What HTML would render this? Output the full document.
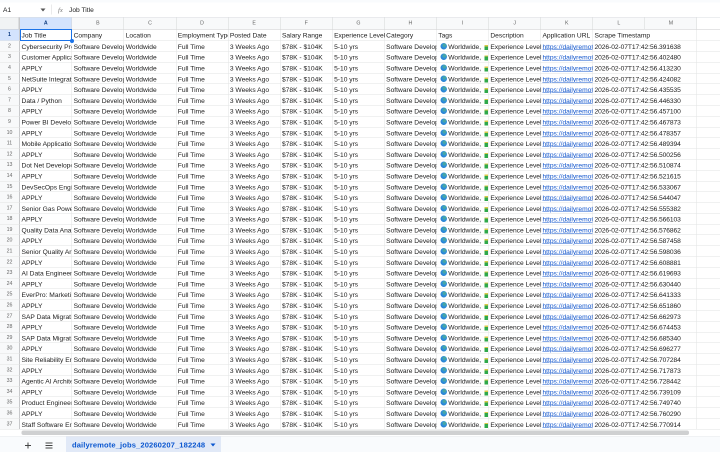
<!DOCTYPE html>
<html><head><meta charset="utf-8"><title>Sheet</title>
<style>
html,body{margin:0;padding:0;width:720px;height:452px;overflow:hidden;background:#fff}
#p{position:absolute;left:0;top:0;width:1440px;height:904px;overflow:hidden;transform:scale(.5);transform-origin:0 0;font-family:"Liberation Sans",Arial,sans-serif;color:#222;filter:blur(.5px)}
#top{position:absolute;left:0;top:0;width:1440px;height:35px;background:#fff;border-bottom:1px solid #dadce0;box-sizing:border-box}
#top:before{content:"";position:absolute;left:0;top:0;width:1440px;height:5px;background:#f9fbfd}
#top b{position:absolute;font-weight:400;font-size:13.33px;line-height:20px;top:10px;color:#222}
#grid{position:absolute;left:0;top:35px;width:1440px}
.h,.r{display:flex;box-sizing:border-box;border-bottom:1px solid #e2e3e3;width:1440px}
.h{height:24px;border-bottom-color:#c8c9cb}
.h u{background:#f8f9fa;color:#666;font-size:10.5px;line-height:23px;text-align:center;text-decoration:none;width:104.2px;flex:none;box-sizing:border-box;border-right:1px solid #d5d6d7}
.h u.c{width:40px;background:#f1f3f4;border-right:3px solid #c8c9cb}
.h u.s{background:#d3e3fd;font-weight:700;color:#0b3a80}
.r{height:21.6px}
.r:nth-child(2){height:22.8px}
.r u{width:40px;flex:none;box-sizing:border-box;background:#f8f9fa;color:#666;font-size:10.5px;line-height:21.6px;text-align:center;text-decoration:none;border-right:2px solid #c8c9cb}
.r:nth-child(2) u{background:#d3e3fd;font-weight:700;color:#0b3a80;line-height:21.8px}
.r i{font-style:normal;width:104.2px;flex:none;box-sizing:border-box;border-right:1px solid #e2e3e3;padding-left:3px;font-size:13.33px;line-height:24.6px;white-space:nowrap;overflow:hidden;color:#222}
.r:nth-child(2) i{line-height:24.8px}
.r i:nth-child(11),.r i:nth-child(8){overflow:visible}
.r i.k{color:#1155cc;text-decoration:underline}
.r i.l{overflow:visible;border-right:0;letter-spacing:-.15px}
.r:nth-child(2) i.l{letter-spacing:0}
.r i.t{position:relative}
.r i.t s{position:absolute;left:7px;top:4px;width:13px;height:13px;border-radius:50%;background:radial-gradient(circle at 60% 35%,#48a8a0 0 18%,#2f8fdc 42%,#1a6fc4 100%)}
.r i.t em{position:absolute;left:95px;top:8px;width:7.4px;height:10px;background:linear-gradient(#d9c84a 0 25%,#2fa84a 25%)}
.r i.t span{position:absolute;left:23px;top:0}
#sel{position:absolute;left:40px;top:58.4px;width:104.4px;height:23.4px;border:2.4px solid #1a73e8;box-sizing:border-box}
#hd{position:absolute;left:140px;top:77.6px;width:8px;height:8px;border-radius:50%;background:#1a73e8}
#sb{position:absolute;left:0;top:859.4px;width:1440px;height:13px;background:#fff}
#th{position:absolute;left:43px;top:861.4px;width:1335px;height:8.4px;border-radius:4px;background:#cfd0d1}
#bot{position:absolute;left:0;top:872px;width:1440px;height:32px;background:#f9fbfd;border-top:1px solid #e6e8ea;box-sizing:border-box}
#tab{position:absolute;left:132px;top:0;width:310px;height:32px;background:#e1e9f7;color:#0b57d0;font-size:15.2px;font-weight:700;line-height:35px;padding-left:12px;box-sizing:border-box;letter-spacing:.2px}
</style></head><body>
<div id="p">
<div id="top">
<b style="left:6px">A1</b>
<svg style="position:absolute;left:81px;top:17px" width="10" height="6"><path d="M0 0H10L5 6Z" fill="#555"/></svg>
<div style="position:absolute;left:102px;top:9px;width:1.4px;height:20px;background:#d5d6d7"></div>
<b style="left:116px;font-family:'Liberation Serif',serif;font-style:italic;color:#777">fx</b>
<b style="left:138px">Job Title</b>
</div>
<div id="grid">
<div class="h"><u class="c"></u><u class="s">A</u><u>B</u><u>C</u><u>D</u><u>E</u><u>F</u><u>G</u><u>H</u><u>I</u><u>J</u><u>K</u><u>L</u><u>M</u></div>
<div class="r"><u>1</u><i>Job Title</i><i>Company</i><i>Location</i><i>Employment Type</i><i>Posted Date</i><i>Salary Range</i><i>Experience Level</i><i>Category</i><i>Tags</i><i>Description</i><i>Application URL</i><i class="l">Scrape Timestamp</i><i></i></div>
<div class="r"><u>2</u><i>Cybersecurity Professional</i><i>Software Developer</i><i>Worldwide</i><i>Full Time</i><i>3 Weeks Ago</i><i>$78K - $104K</i><i>5-10 yrs</i><i>Software Development</i><i class="t"><s></s><span>Worldwide,</span><em></em></i><i>Experience Level</i><i class="k">https://dailyremote.com</i><i class="l">2026-02-07T17:42:56.391638</i><i></i></div>
<div class="r"><u>3</u><i>Customer Application</i><i>Software Developer</i><i>Worldwide</i><i>Full Time</i><i>3 Weeks Ago</i><i>$78K - $104K</i><i>5-10 yrs</i><i>Software Development</i><i class="t"><s></s><span>Worldwide,</span><em></em></i><i>Experience Level</i><i class="k">https://dailyremote.com</i><i class="l">2026-02-07T17:42:56.402480</i><i></i></div>
<div class="r"><u>4</u><i>APPLY</i><i>Software Developer</i><i>Worldwide</i><i>Full Time</i><i>3 Weeks Ago</i><i>$78K - $104K</i><i>5-10 yrs</i><i>Software Development</i><i class="t"><s></s><span>Worldwide,</span><em></em></i><i>Experience Level</i><i class="k">https://dailyremote.com</i><i class="l">2026-02-07T17:42:56.413230</i><i></i></div>
<div class="r"><u>5</u><i>NetSuite Integration</i><i>Software Developer</i><i>Worldwide</i><i>Full Time</i><i>3 Weeks Ago</i><i>$78K - $104K</i><i>5-10 yrs</i><i>Software Development</i><i class="t"><s></s><span>Worldwide,</span><em></em></i><i>Experience Level</i><i class="k">https://dailyremote.com</i><i class="l">2026-02-07T17:42:56.424082</i><i></i></div>
<div class="r"><u>6</u><i>APPLY</i><i>Software Developer</i><i>Worldwide</i><i>Full Time</i><i>3 Weeks Ago</i><i>$78K - $104K</i><i>5-10 yrs</i><i>Software Development</i><i class="t"><s></s><span>Worldwide,</span><em></em></i><i>Experience Level</i><i class="k">https://dailyremote.com</i><i class="l">2026-02-07T17:42:56.435535</i><i></i></div>
<div class="r"><u>7</u><i>Data / Python</i><i>Software Developer</i><i>Worldwide</i><i>Full Time</i><i>3 Weeks Ago</i><i>$78K - $104K</i><i>5-10 yrs</i><i>Software Development</i><i class="t"><s></s><span>Worldwide,</span><em></em></i><i>Experience Level</i><i class="k">https://dailyremote.com</i><i class="l">2026-02-07T17:42:56.446330</i><i></i></div>
<div class="r"><u>8</u><i>APPLY</i><i>Software Developer</i><i>Worldwide</i><i>Full Time</i><i>3 Weeks Ago</i><i>$78K - $104K</i><i>5-10 yrs</i><i>Software Development</i><i class="t"><s></s><span>Worldwide,</span><em></em></i><i>Experience Level</i><i class="k">https://dailyremote.com</i><i class="l">2026-02-07T17:42:56.457100</i><i></i></div>
<div class="r"><u>9</u><i>Power BI Developer</i><i>Software Developer</i><i>Worldwide</i><i>Full Time</i><i>3 Weeks Ago</i><i>$78K - $104K</i><i>5-10 yrs</i><i>Software Development</i><i class="t"><s></s><span>Worldwide,</span><em></em></i><i>Experience Level</i><i class="k">https://dailyremote.com</i><i class="l">2026-02-07T17:42:56.467873</i><i></i></div>
<div class="r"><u>10</u><i>APPLY</i><i>Software Developer</i><i>Worldwide</i><i>Full Time</i><i>3 Weeks Ago</i><i>$78K - $104K</i><i>5-10 yrs</i><i>Software Development</i><i class="t"><s></s><span>Worldwide,</span><em></em></i><i>Experience Level</i><i class="k">https://dailyremote.com</i><i class="l">2026-02-07T17:42:56.478357</i><i></i></div>
<div class="r"><u>11</u><i>Mobile Application</i><i>Software Developer</i><i>Worldwide</i><i>Full Time</i><i>3 Weeks Ago</i><i>$78K - $104K</i><i>5-10 yrs</i><i>Software Development</i><i class="t"><s></s><span>Worldwide,</span><em></em></i><i>Experience Level</i><i class="k">https://dailyremote.com</i><i class="l">2026-02-07T17:42:56.489394</i><i></i></div>
<div class="r"><u>12</u><i>APPLY</i><i>Software Developer</i><i>Worldwide</i><i>Full Time</i><i>3 Weeks Ago</i><i>$78K - $104K</i><i>5-10 yrs</i><i>Software Development</i><i class="t"><s></s><span>Worldwide,</span><em></em></i><i>Experience Level</i><i class="k">https://dailyremote.com</i><i class="l">2026-02-07T17:42:56.500256</i><i></i></div>
<div class="r"><u>13</u><i>Dot Net Developer</i><i>Software Developer</i><i>Worldwide</i><i>Full Time</i><i>3 Weeks Ago</i><i>$78K - $104K</i><i>5-10 yrs</i><i>Software Development</i><i class="t"><s></s><span>Worldwide,</span><em></em></i><i>Experience Level</i><i class="k">https://dailyremote.com</i><i class="l">2026-02-07T17:42:56.510874</i><i></i></div>
<div class="r"><u>14</u><i>APPLY</i><i>Software Developer</i><i>Worldwide</i><i>Full Time</i><i>3 Weeks Ago</i><i>$78K - $104K</i><i>5-10 yrs</i><i>Software Development</i><i class="t"><s></s><span>Worldwide,</span><em></em></i><i>Experience Level</i><i class="k">https://dailyremote.com</i><i class="l">2026-02-07T17:42:56.521615</i><i></i></div>
<div class="r"><u>15</u><i>DevSecOps Engineer</i><i>Software Developer</i><i>Worldwide</i><i>Full Time</i><i>3 Weeks Ago</i><i>$78K - $104K</i><i>5-10 yrs</i><i>Software Development</i><i class="t"><s></s><span>Worldwide,</span><em></em></i><i>Experience Level</i><i class="k">https://dailyremote.com</i><i class="l">2026-02-07T17:42:56.533067</i><i></i></div>
<div class="r"><u>16</u><i>APPLY</i><i>Software Developer</i><i>Worldwide</i><i>Full Time</i><i>3 Weeks Ago</i><i>$78K - $104K</i><i>5-10 yrs</i><i>Software Development</i><i class="t"><s></s><span>Worldwide,</span><em></em></i><i>Experience Level</i><i class="k">https://dailyremote.com</i><i class="l">2026-02-07T17:42:56.544047</i><i></i></div>
<div class="r"><u>17</u><i>Senior Gas Power</i><i>Software Developer</i><i>Worldwide</i><i>Full Time</i><i>3 Weeks Ago</i><i>$78K - $104K</i><i>5-10 yrs</i><i>Software Development</i><i class="t"><s></s><span>Worldwide,</span><em></em></i><i>Experience Level</i><i class="k">https://dailyremote.com</i><i class="l">2026-02-07T17:42:56.555382</i><i></i></div>
<div class="r"><u>18</u><i>APPLY</i><i>Software Developer</i><i>Worldwide</i><i>Full Time</i><i>3 Weeks Ago</i><i>$78K - $104K</i><i>5-10 yrs</i><i>Software Development</i><i class="t"><s></s><span>Worldwide,</span><em></em></i><i>Experience Level</i><i class="k">https://dailyremote.com</i><i class="l">2026-02-07T17:42:56.566103</i><i></i></div>
<div class="r"><u>19</u><i>Quality Data Analyst</i><i>Software Developer</i><i>Worldwide</i><i>Full Time</i><i>3 Weeks Ago</i><i>$78K - $104K</i><i>5-10 yrs</i><i>Software Development</i><i class="t"><s></s><span>Worldwide,</span><em></em></i><i>Experience Level</i><i class="k">https://dailyremote.com</i><i class="l">2026-02-07T17:42:56.576862</i><i></i></div>
<div class="r"><u>20</u><i>APPLY</i><i>Software Developer</i><i>Worldwide</i><i>Full Time</i><i>3 Weeks Ago</i><i>$78K - $104K</i><i>5-10 yrs</i><i>Software Development</i><i class="t"><s></s><span>Worldwide,</span><em></em></i><i>Experience Level</i><i class="k">https://dailyremote.com</i><i class="l">2026-02-07T17:42:56.587458</i><i></i></div>
<div class="r"><u>21</u><i>Senior Quality Analyst</i><i>Software Developer</i><i>Worldwide</i><i>Full Time</i><i>3 Weeks Ago</i><i>$78K - $104K</i><i>5-10 yrs</i><i>Software Development</i><i class="t"><s></s><span>Worldwide,</span><em></em></i><i>Experience Level</i><i class="k">https://dailyremote.com</i><i class="l">2026-02-07T17:42:56.598036</i><i></i></div>
<div class="r"><u>22</u><i>APPLY</i><i>Software Developer</i><i>Worldwide</i><i>Full Time</i><i>3 Weeks Ago</i><i>$78K - $104K</i><i>5-10 yrs</i><i>Software Development</i><i class="t"><s></s><span>Worldwide,</span><em></em></i><i>Experience Level</i><i class="k">https://dailyremote.com</i><i class="l">2026-02-07T17:42:56.608881</i><i></i></div>
<div class="r"><u>23</u><i>AI Data Engineer</i><i>Software Developer</i><i>Worldwide</i><i>Full Time</i><i>3 Weeks Ago</i><i>$78K - $104K</i><i>5-10 yrs</i><i>Software Development</i><i class="t"><s></s><span>Worldwide,</span><em></em></i><i>Experience Level</i><i class="k">https://dailyremote.com</i><i class="l">2026-02-07T17:42:56.619693</i><i></i></div>
<div class="r"><u>24</u><i>APPLY</i><i>Software Developer</i><i>Worldwide</i><i>Full Time</i><i>3 Weeks Ago</i><i>$78K - $104K</i><i>5-10 yrs</i><i>Software Development</i><i class="t"><s></s><span>Worldwide,</span><em></em></i><i>Experience Level</i><i class="k">https://dailyremote.com</i><i class="l">2026-02-07T17:42:56.630440</i><i></i></div>
<div class="r"><u>25</u><i>EverPro: Marketing</i><i>Software Developer</i><i>Worldwide</i><i>Full Time</i><i>3 Weeks Ago</i><i>$78K - $104K</i><i>5-10 yrs</i><i>Software Development</i><i class="t"><s></s><span>Worldwide,</span><em></em></i><i>Experience Level</i><i class="k">https://dailyremote.com</i><i class="l">2026-02-07T17:42:56.641333</i><i></i></div>
<div class="r"><u>26</u><i>APPLY</i><i>Software Developer</i><i>Worldwide</i><i>Full Time</i><i>3 Weeks Ago</i><i>$78K - $104K</i><i>5-10 yrs</i><i>Software Development</i><i class="t"><s></s><span>Worldwide,</span><em></em></i><i>Experience Level</i><i class="k">https://dailyremote.com</i><i class="l">2026-02-07T17:42:56.651860</i><i></i></div>
<div class="r"><u>27</u><i>SAP Data Migration</i><i>Software Developer</i><i>Worldwide</i><i>Full Time</i><i>3 Weeks Ago</i><i>$78K - $104K</i><i>5-10 yrs</i><i>Software Development</i><i class="t"><s></s><span>Worldwide,</span><em></em></i><i>Experience Level</i><i class="k">https://dailyremote.com</i><i class="l">2026-02-07T17:42:56.662973</i><i></i></div>
<div class="r"><u>28</u><i>APPLY</i><i>Software Developer</i><i>Worldwide</i><i>Full Time</i><i>3 Weeks Ago</i><i>$78K - $104K</i><i>5-10 yrs</i><i>Software Development</i><i class="t"><s></s><span>Worldwide,</span><em></em></i><i>Experience Level</i><i class="k">https://dailyremote.com</i><i class="l">2026-02-07T17:42:56.674453</i><i></i></div>
<div class="r"><u>29</u><i>SAP Data Migration</i><i>Software Developer</i><i>Worldwide</i><i>Full Time</i><i>3 Weeks Ago</i><i>$78K - $104K</i><i>5-10 yrs</i><i>Software Development</i><i class="t"><s></s><span>Worldwide,</span><em></em></i><i>Experience Level</i><i class="k">https://dailyremote.com</i><i class="l">2026-02-07T17:42:56.685340</i><i></i></div>
<div class="r"><u>30</u><i>APPLY</i><i>Software Developer</i><i>Worldwide</i><i>Full Time</i><i>3 Weeks Ago</i><i>$78K - $104K</i><i>5-10 yrs</i><i>Software Development</i><i class="t"><s></s><span>Worldwide,</span><em></em></i><i>Experience Level</i><i class="k">https://dailyremote.com</i><i class="l">2026-02-07T17:42:56.696277</i><i></i></div>
<div class="r"><u>31</u><i>Site Reliability Engineer</i><i>Software Developer</i><i>Worldwide</i><i>Full Time</i><i>3 Weeks Ago</i><i>$78K - $104K</i><i>5-10 yrs</i><i>Software Development</i><i class="t"><s></s><span>Worldwide,</span><em></em></i><i>Experience Level</i><i class="k">https://dailyremote.com</i><i class="l">2026-02-07T17:42:56.707284</i><i></i></div>
<div class="r"><u>32</u><i>APPLY</i><i>Software Developer</i><i>Worldwide</i><i>Full Time</i><i>3 Weeks Ago</i><i>$78K - $104K</i><i>5-10 yrs</i><i>Software Development</i><i class="t"><s></s><span>Worldwide,</span><em></em></i><i>Experience Level</i><i class="k">https://dailyremote.com</i><i class="l">2026-02-07T17:42:56.717873</i><i></i></div>
<div class="r"><u>33</u><i>Agentic AI Architect</i><i>Software Developer</i><i>Worldwide</i><i>Full Time</i><i>3 Weeks Ago</i><i>$78K - $104K</i><i>5-10 yrs</i><i>Software Development</i><i class="t"><s></s><span>Worldwide,</span><em></em></i><i>Experience Level</i><i class="k">https://dailyremote.com</i><i class="l">2026-02-07T17:42:56.728442</i><i></i></div>
<div class="r"><u>34</u><i>APPLY</i><i>Software Developer</i><i>Worldwide</i><i>Full Time</i><i>3 Weeks Ago</i><i>$78K - $104K</i><i>5-10 yrs</i><i>Software Development</i><i class="t"><s></s><span>Worldwide,</span><em></em></i><i>Experience Level</i><i class="k">https://dailyremote.com</i><i class="l">2026-02-07T17:42:56.739109</i><i></i></div>
<div class="r"><u>35</u><i>Product Engineer</i><i>Software Developer</i><i>Worldwide</i><i>Full Time</i><i>3 Weeks Ago</i><i>$78K - $104K</i><i>5-10 yrs</i><i>Software Development</i><i class="t"><s></s><span>Worldwide,</span><em></em></i><i>Experience Level</i><i class="k">https://dailyremote.com</i><i class="l">2026-02-07T17:42:56.749740</i><i></i></div>
<div class="r"><u>36</u><i>APPLY</i><i>Software Developer</i><i>Worldwide</i><i>Full Time</i><i>3 Weeks Ago</i><i>$78K - $104K</i><i>5-10 yrs</i><i>Software Development</i><i class="t"><s></s><span>Worldwide,</span><em></em></i><i>Experience Level</i><i class="k">https://dailyremote.com</i><i class="l">2026-02-07T17:42:56.760290</i><i></i></div>
<div class="r"><u>37</u><i>Staff Software Engineer</i><i>Software Developer</i><i>Worldwide</i><i>Full Time</i><i>3 Weeks Ago</i><i>$78K - $104K</i><i>5-10 yrs</i><i>Software Development</i><i class="t"><s></s><span>Worldwide,</span><em></em></i><i>Experience Level</i><i class="k">https://dailyremote.com</i><i class="l">2026-02-07T17:42:56.770914</i><i></i></div>
</div>
<div id="sel"></div><div id="hd"></div>
<div id="sb"></div><div id="th"></div>
<div id="bot">
<svg style="position:absolute;left:48px;top:10px" width="16" height="16"><path d="M8 2V14M2 8H14" stroke="#444" stroke-width="2"/></svg>
<svg style="position:absolute;left:90px;top:10px" width="16" height="16"><path d="M1 3H15M1 8H15M1 13H15" stroke="#444" stroke-width="1.8"/></svg>
<div id="tab">dailyremote_jobs_20260207_182248<svg style="position:absolute;left:289px;top:14px" width="10" height="6"><path d="M0 0H10L5 6Z" fill="#0b57d0"/></svg></div>
</div>
</div>
</body></html>
